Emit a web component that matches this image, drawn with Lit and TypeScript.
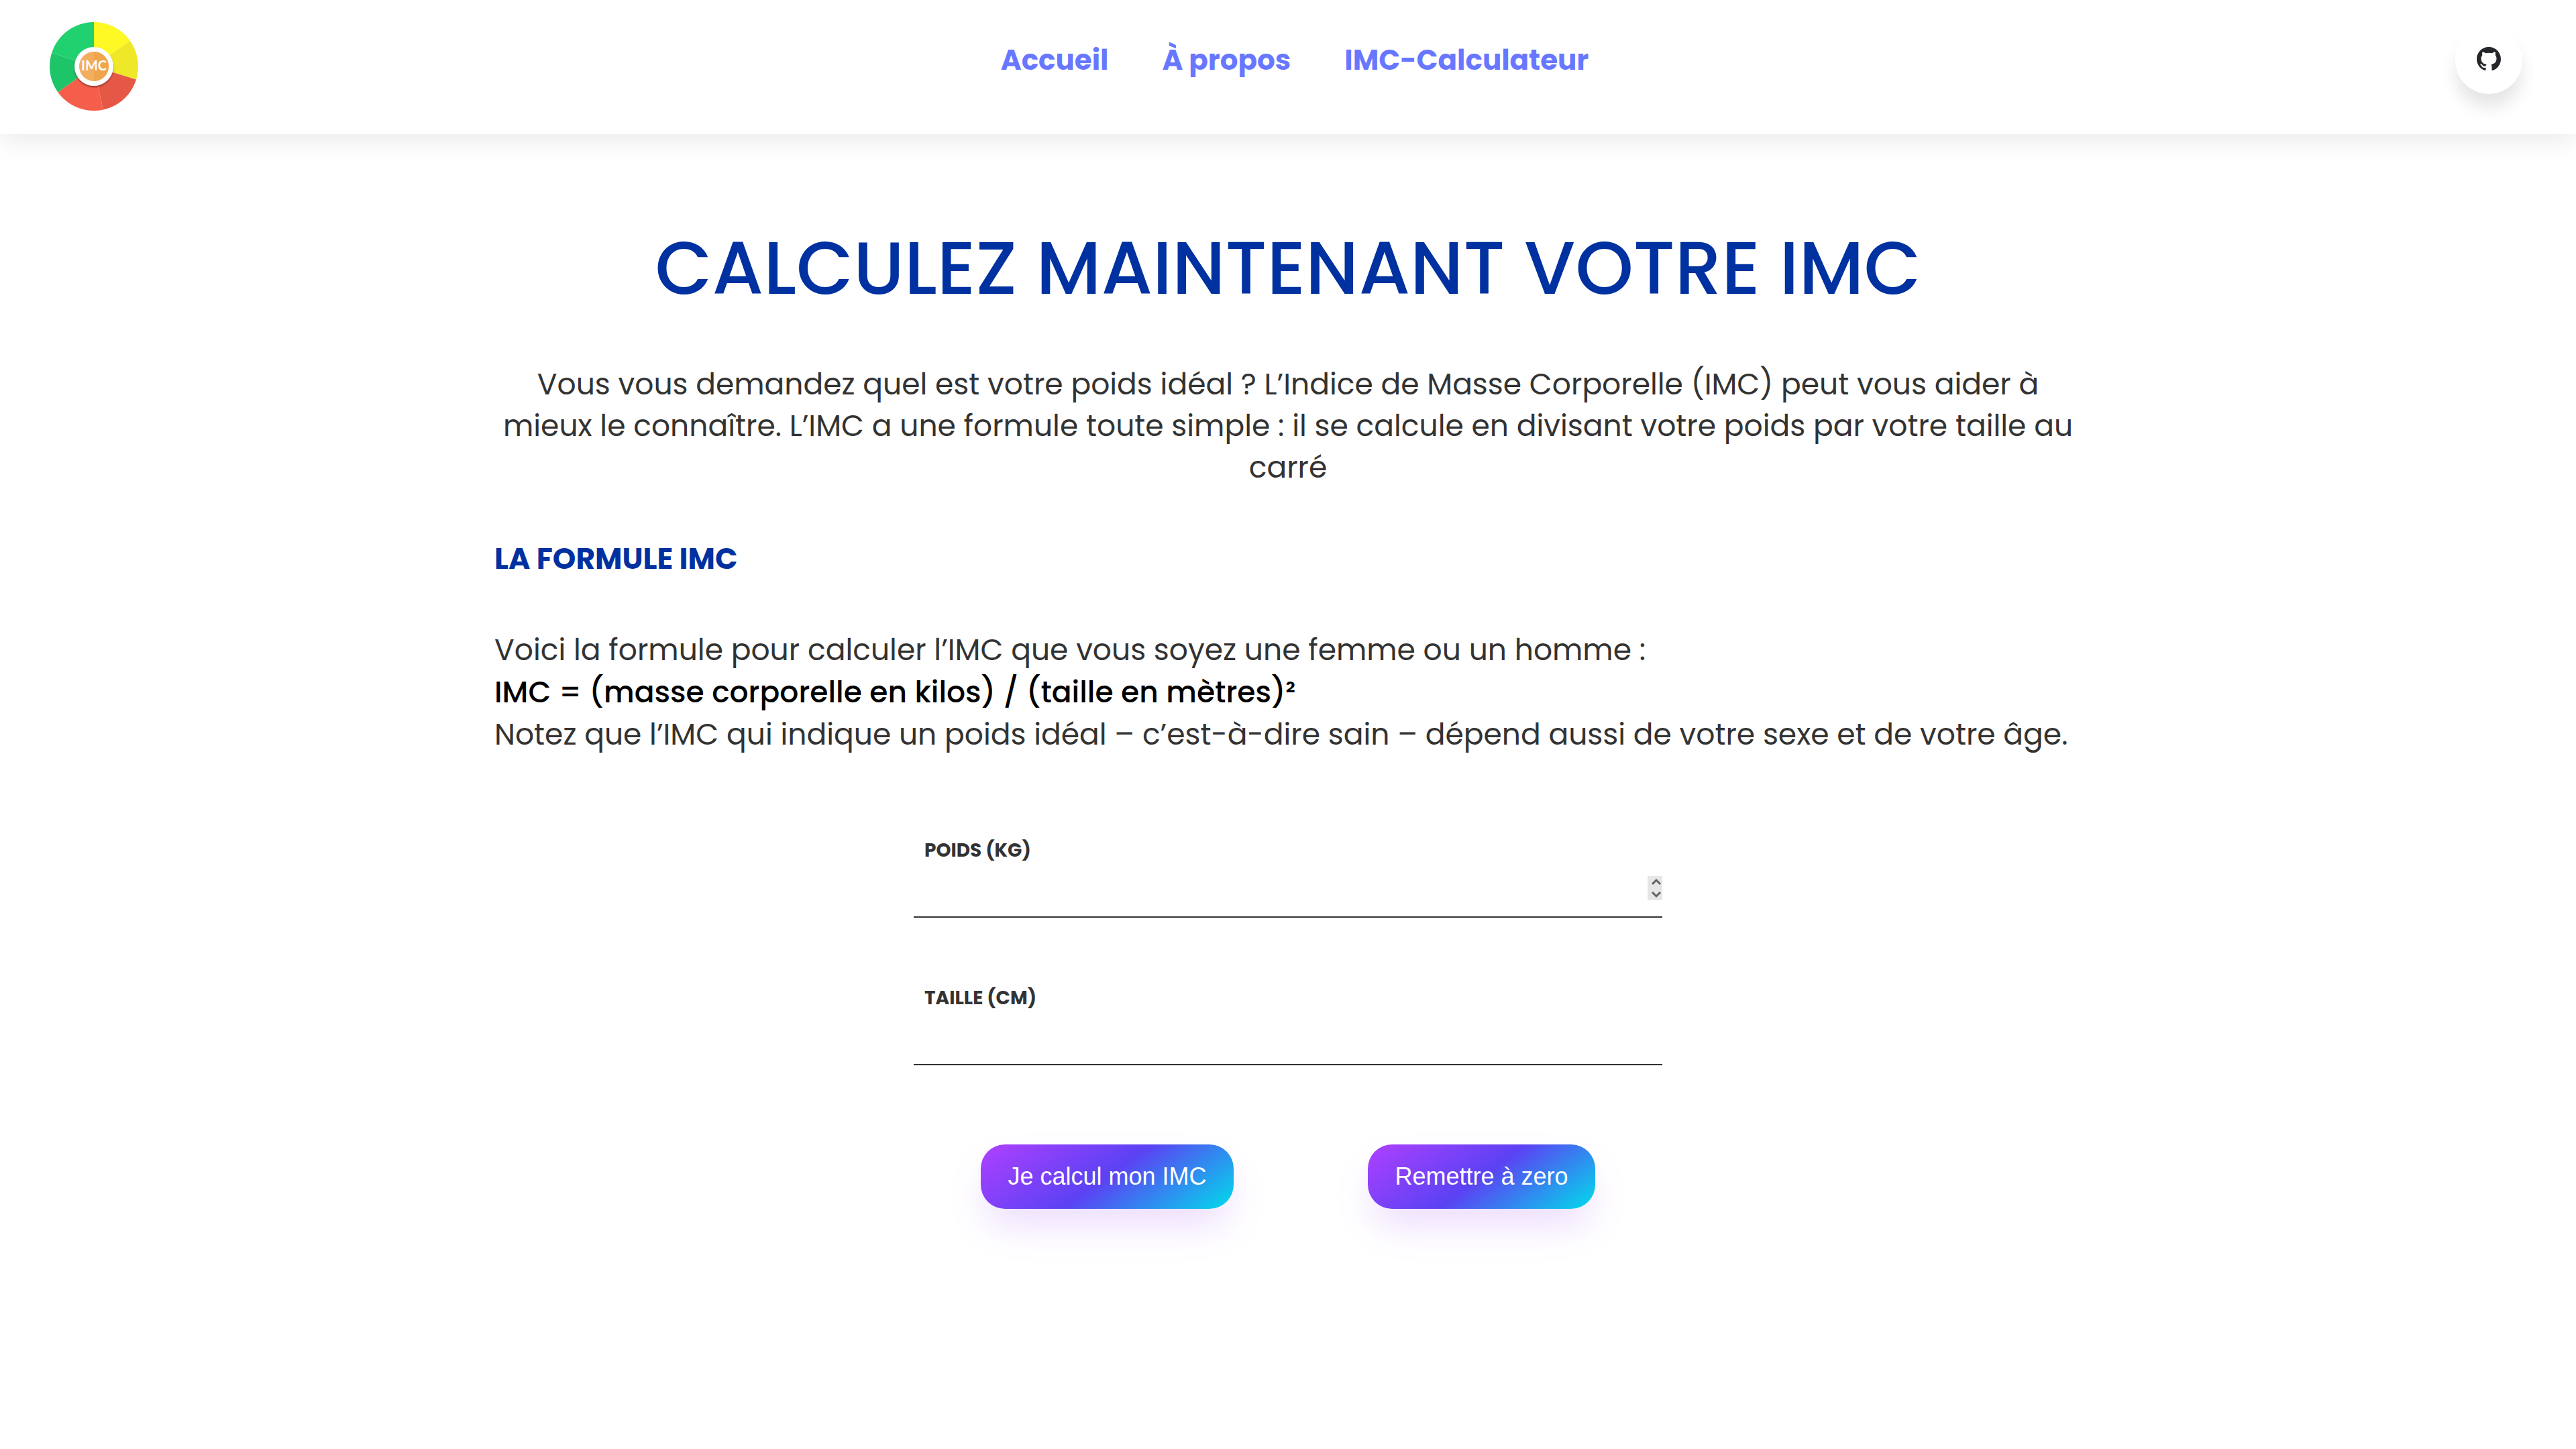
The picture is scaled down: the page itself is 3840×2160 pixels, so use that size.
import { LitElement, html, css } from "lit";
import { customElement, state } from "lit/decorators.js";

@customElement("app-header")
class AppHeader extends LitElement {
  static styles = css`
    :host {
      display: block;
      font-family: Poppins, Inter, sans-serif;
    }
    .bar {
      display: flex;
      justify-content: space-between;
      align-items: flex-start;
      height: 200px;
      box-sizing: border-box;
      padding: 32px 80px 0 72px;
      background: #fff;
      box-shadow: 0 8px 40px rgba(0, 0, 0, 0.09);
    }
    .logo {
      display: block;
      width: 136px;
      height: 136px;
    }
    .logo svg {
      display: block;
      width: 136px;
      height: 136px;
    }
    .initials {
      font: 700 20px Lato, sans-serif;
      fill: #fff;
    }
    .nav {
      display: flex;
      gap: 80px;
      padding: 26px 8px 0 0;
    }
    .link {
      color: #6877ff;
      font-size: 42px;
      font-weight: 700;
      line-height: 64px;
      text-decoration: none;
    }
    .github {
      display: flex;
      align-items: center;
      justify-content: center;
      width: 100px;
      height: 100px;
      box-sizing: border-box;
      margin-top: 8px;
      padding-bottom: 4px;
      border-radius: 50%;
      background: #fff;
      box-shadow: 0 20px 24px rgba(0, 0, 0, 0.1);
    }
    .github svg {
      width: 36px;
      height: 36px;
      fill: #24262b;
    }
  `;

  render() {
    return html`
      <header class="bar">
        <a class="logo" href="#" aria-label="IMC">
          <svg viewBox="-68 -67 136 136">
            <defs>
              <clipPath id="disc"><circle r="66" /></clipPath>
              <filter id="soft" x="-30%" y="-30%" width="160%" height="160%">
                <feDropShadow dx="0" dy="2" stdDeviation="1" flood-color="#501818" flood-opacity="0.55" />
              </filter>
            </defs>
            <g clip-path="url(#disc)">
              <path d="M0 0V-90H90V-64z" fill="#fef824" />
              <path d="M0 0L90 -64V28z" fill="#efe828" />
              <path d="M0 0L90 28V90H19z" fill="#e55846" />
              <path d="M0 0L19 90H-90V64z" fill="#f55e4b" />
              <path d="M0 0L-90 64V-29z" fill="#1ec468" />
              <path d="M0 0L-90 -29V-90H0z" fill="#21d06f" />
            </g>
            <circle r="29" fill="#fdfdfd" filter="url(#soft)" />
            <circle r="22" fill="#f2ae5f" />
            <path d="M0 -22A22 22 0 0 1 0 22z" fill="#efa54b" />
            <text class="initials" x="0" y="6" text-anchor="middle">IMC</text>
          </svg>
        </a>
        <nav class="nav">
          <a class="link" href="#accueil">Accueil</a>
          <a class="link" href="#a-propos">À propos</a>
          <a class="link" href="#imc">IMC-Calculateur</a>
        </nav>
        <a class="github" href="#github" aria-label="GitHub">
          <svg viewBox="0 0 16 16">
            <path d="M8 0C3.58 0 0 3.58 0 8c0 3.54 2.29 6.53 5.47 7.59.4.07.55-.17.55-.38 0-.19-.01-.82-.01-1.49-2.01.37-2.53-.49-2.69-.94-.09-.23-.48-.94-.82-1.13-.28-.15-.68-.52-.01-.53.63-.01 1.08.58 1.23.82.72 1.21 1.87.87 2.33.66.07-.52.28-.87.51-1.07-1.78-.2-3.64-.89-3.64-3.95 0-.87.31-1.59.82-2.15-.08-.2-.36-1.02.08-2.12 0 0 .67-.21 2.2.82.64-.18 1.32-.27 2-.27s1.36.09 2 .27c1.53-1.04 2.2-.82 2.2-.82.44 1.1.16 1.92.08 2.12.51.56.82 1.27.82 2.15 0 3.07-1.87 3.75-3.65 3.95.29.25.54.73.54 1.48 0 1.07-.01 1.93-.01 2.2 0 .21.15.46.55.38A8.01 8.01 0 0 0 16 8c0-4.42-3.58-8-8-8z" />
          </svg>
        </a>
      </header>
    `;
  }
}

@customElement("app-root")
class AppRoot extends LitElement {
  @state() private weight = "";
  @state() private size = "";

  static styles = css`
    :host {
      display: block;
      min-height: 100vh;
      background: #fff;
      color: #333;
      font-family: Poppins, Inter, sans-serif;
      font-size: 44px;
      font-weight: 400;
      line-height: 63px;
    }
    .page {
      max-width: 2366px;
      margin: 0 auto;
      padding: 120px 40px;
    }
    .title {
      margin: 0;
      color: #0031a0;
      font-size: 110px;
      font-weight: 500;
      line-height: 160px;
      text-align: center;
    }
    .intro {
      margin: 62px 0 0;
      line-height: 62px;
      text-align: center;
    }
    .subtitle {
      margin: 73px 0;
      color: #0031a0;
      font-size: 44px;
      font-weight: 700;
      line-height: 63px;
    }
    .text {
      margin: 0;
    }
    .formula {
      color: #000;
      font-weight: 500;
    }
    .form {
      width: 1116px;
      max-width: 100%;
      margin: 122px auto 0;
    }
    .field {
      margin-bottom: 100px;
    }
    .label {
      display: block;
      padding: 0 16px;
      font-size: 28px;
      font-weight: 700;
      line-height: 40px;
    }
    .control {
      display: flex;
      align-items: center;
      box-sizing: border-box;
      height: 80px;
      padding-bottom: 6px;
      border-bottom: 2px solid #333;
    }
    .input {
      flex: 1;
      min-width: 0;
      padding: 0 16px;
      border: 0;
      outline: 0;
      background: none;
      color: #333;
      font: inherit;
      appearance: textfield;
    }
    .stepper {
      display: flex;
      flex-direction: column;
      background: #e6e6e6;
    }
    .step {
      display: block;
      width: 22px;
      height: 18px;
      padding: 0;
      border: 0;
      background: none;
    }
    .step svg {
      display: block;
      fill: none;
      stroke: #636363;
      stroke-width: 3;
    }
    .actions {
      display: flex;
      justify-content: space-around;
      margin-top: 118px;
    }
    .button {
      height: 96px;
      padding: 0 40px;
      border: 0;
      border-radius: 36px;
      background: linear-gradient(144deg, #af40ff, #5b42f3 50%, #00ddeb);
      box-shadow: rgba(151, 65, 252, 0.2) 0 30px 60px -10px;
      color: #fff;
      font-family: "Liberation Sans", Arial, sans-serif;
      font-size: 36px;
      line-height: 40px;
    }
  `;

  private stepWeight(delta: number) {
    this.weight = String(Math.max(0, Number(this.weight) + delta));
  }

  private reset() {
    this.weight = "";
    this.size = "";
  }

  render() {
    return html`
      <app-header></app-header>
      <main class="page">
        <h1 class="title">CALCULEZ MAINTENANT VOTRE IMC</h1>
        <p class="intro">
          Vous vous demandez quel est votre poids idéal ? L’Indice de Masse Corporelle (IMC) peut vous aider à<br />
          mieux le connaître. L’IMC a une formule toute simple : il se calcule en divisant votre poids par votre taille au<br />
          carré
        </p>
        <h2 class="subtitle">LA FORMULE IMC</h2>
        <p class="text">Voici la formule pour calculer l’IMC que vous soyez une femme ou un homme :</p>
        <p class="text formula">IMC = (masse corporelle en kilos) / (taille en mètres)²</p>
        <p class="text">Notez que l’IMC qui indique un poids idéal – c’est-à-dire sain – dépend aussi de votre sexe et de votre âge.</p>
        <form class="form" @submit=${(e: Event) => e.preventDefault()}>
          <div class="field">
            <label class="label" for="weight">POIDS (KG)</label>
            <div class="control">
              <input
                class="input"
                id="weight"
                type="number"
                .value=${this.weight}
                @input=${(e: Event) => (this.weight = (e.target as HTMLInputElement).value)}
              />
              <div class="stepper">
                <button class="step" type="button" aria-label="Augmenter" @click=${() => this.stepWeight(1)}>
                  <svg width="22" height="18" viewBox="0 0 22 18"><path d="M7 12L13 6L19 12" /></svg>
                </button>
                <button class="step" type="button" aria-label="Diminuer" @click=${() => this.stepWeight(-1)}>
                  <svg width="22" height="18" viewBox="0 0 22 18"><path d="M7 6L13 12L19 6" /></svg>
                </button>
              </div>
            </div>
          </div>
          <div class="field">
            <label class="label" for="size">TAILLE (CM)</label>
            <div class="control">
              <input
                class="input"
                id="size"
                type="number"
                .value=${this.size}
                @input=${(e: Event) => (this.size = (e.target as HTMLInputElement).value)}
              />
            </div>
          </div>
          <div class="actions">
            <button class="button" type="submit">Je calcul mon IMC</button>
            <button class="button" type="button" @click=${this.reset}>Remettre à zero</button>
          </div>
        </form>
      </main>
    `;
  }
}
